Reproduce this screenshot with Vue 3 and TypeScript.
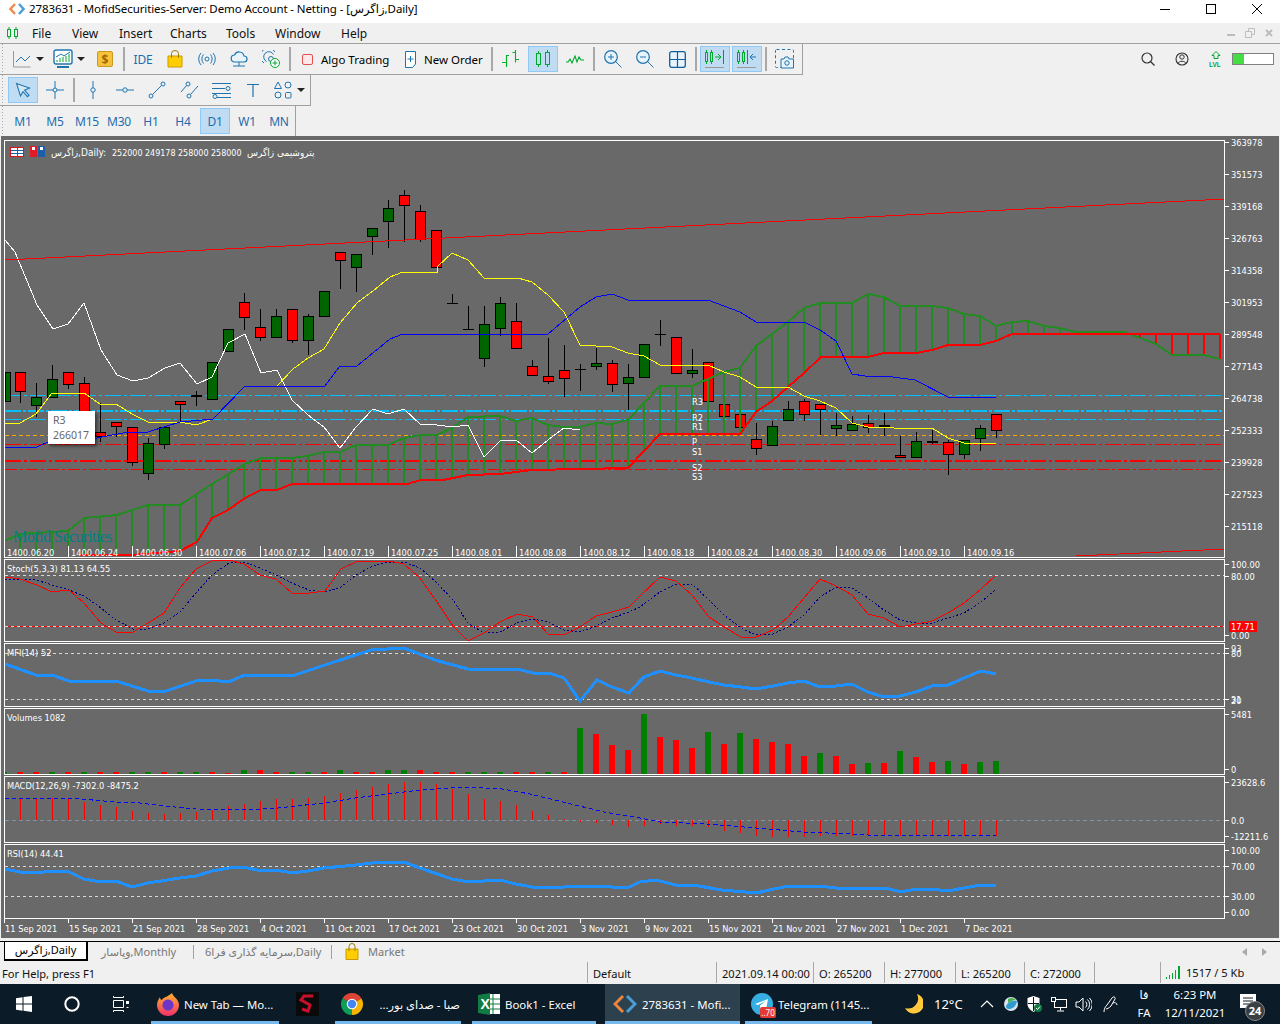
<script setup lang="ts">
type Candle = [number, 'G' | 'R' | 'D', number, number, number, number]
const candles: Candle[] = [
  [4,'G',372,401,372,401],[20,'R',372,391,372,403],[36,'G',397,405,383,417],[52,'G',379,397,365,397],
  [68,'R',372,384,372,389],[84,'R',383,415,377,420],[100,'R',432,436,403,442],[116,'R',422,426,422,437],
  [132,'R',427,462,427,466],[148,'G',443,473,438,480],[164,'G',427,444,427,449],[180,'R',401,404,401,422],
  [196,'D',395,396,391,406],[212,'G',362,399,362,399],[228,'G',329,351,329,351],[244,'R',302,317,293,330],
  [260,'R',327,337,309,341],[276,'G',316,337,309,337],[292,'R',309,340,309,343],[308,'G',316,340,314,355],
  [324,'G',291,316,291,316],[340,'R',252,260,252,289],[356,'G',254,267,254,292],[372,'G',228,236,228,255],
  [388,'G',208,221,200,248],[404,'R',195,205,190,242],[420,'R',211,239,205,242],[436,'R',230,267,230,267],
  [452,'D',303,303,294,303],[468,'D',329,329,306,329],[484,'G',324,358,306,367],[500,'G',303,328,297,336],
  [516,'R',321,348,303,348],[532,'R',366,375,360,375],[548,'R',376,381,338,384],[564,'R',370,378,345,397],
  [580,'D',369,369,364,391],[596,'G',363,366,348,370],[612,'R',363,384,360,392],[628,'G',377,383,364,410],
  [644,'G',344,377,344,377],[660,'D',334,334,320,346],[676,'R',337,373,337,373],[692,'G',370,373,349,378],
  [708,'R',362,401,362,401],[724,'R',404,416,404,416],[740,'R',414,427,414,427],[756,'R',439,448,423,455],
  [772,'G',426,445,421,445],[788,'G',409,420,401,420],[804,'R',401,414,399,421],[820,'R',404,409,404,435],
  [836,'G',425,428,413,436],[852,'G',424,430,416,430],[868,'R',423,427,415,433],[884,'D',425,426,413,436],
  [900,'R',455,457,436,457],[916,'G',441,457,432,457],[932,'D',441,442,430,444],[948,'R',442,454,440,475],
  [964,'G',440,454,440,459],[980,'G',428,438,425,451],[996,'R',414,430,414,438],
]

const yellow = '5,423 20,423 36,414 52,393 84,393 100,404 116,404 132,414 148,422 180,422 196,425 213,419 245,386 277,386 293,369 308,358 324,349 340,323 357,303 373,291 390,277 403,272 437,272 437,267 452,253 468,260 484,278 518,278 532,282 548,295 564,312 580,345 612,347 628,353 644,356 660,365 708,365 724,372 740,377 756,387 788,387 804,396 820,401 836,408 852,423 868,427 894,428 932,428 948,438 964,443 996,443'
const blue = '5,447 37,447 48,442 97,438 128,432 148,432 180,422 213,419 245,386 325,386 340,366 357,366 390,339 403,334 548,334 580,307 596,297 612,294 628,300 708,300 740,312 756,322 804,322 820,330 836,341 852,374 865,376 893,377 915,380 948,397 996,397'
const white = '5,240 15,252 37,305 53,329 68,324 84,303 101,350 117,375 133,381 148,378 165,368 180,363 197,384 212,377 228,343 245,334 261,373 277,370 292,400 308,415 324,427 340,448 356,427 373,409 388,414 404,409 421,425 430,424 452,427 468,425 484,457 500,441 516,440 532,453 548,440 564,428 580,430'
const kumoA = '5,541 20,534 68,531 84,518 117,515 148,505 180,505 212,484 245,464 261,458 292,458 308,456 324,452 340,452 356,445 388,445 404,438 421,435 437,435 452,428 468,417 500,416 516,421 532,418 548,425 564,427 580,427 596,423 612,424 628,420 660,386 692,386 724,372 740,368 756,346 772,334 788,322 804,308 820,303 852,303 868,294 884,297 900,306 932,306 948,308 964,314 980,316 996,326 1012,322 1028,321 1044,326 1060,328 1076,332 1124,332 1140,338 1156,344 1172,355 1204,355 1220,359'
const kumoB = '80,555 132,555 180,551 197,542 212,518 228,510 245,498 261,490 277,490 292,484 407,484 421,480 443,480 468,475 500,474 532,470 628,468 660,434 740,434 756,412 772,401 788,387 804,373 821,357 868,357 884,353 916,353 932,350 948,345 980,345 996,341 1012,334 1220,334'

const stochK = '5,577 20,579 37,585 52,592 69,590 84,603 101,623 116,632 133,632 148,623 164,613 180,588 196,569 212,561 229,560 244,564 260,575 276,579 292,593 309,593 325,591 341,569 356,562 373,561 389,561 404,564 420,578 437,602 453,626 468,641 484,633 500,622 517,614 533,617 548,634 564,635 580,627 596,616 612,612 629,607 640,596 660,577 676,581 692,595 709,617 724,627 741,637 756,637 773,630 788,617 804,598 820,579 836,586 852,595 868,614 884,618 900,627 916,624 932,621 948,613 964,603 981,589 995,576'
const stochD = '5,579 36,580 52,585 69,590 84,596 101,608 116,620 133,629 148,629 164,623 180,612 196,593 212,575 229,563 244,562 260,568 276,575 292,583 309,590 325,592 341,587 356,575 373,566 389,562 404,562 420,568 437,583 453,600 468,623 484,633 500,632 517,623 533,619 548,622 564,630 580,632 596,626 612,618 629,612 640,607 660,592 676,584 692,584 709,600 724,615 741,628 756,635 773,634 788,627 804,615 820,597 836,587 852,588 868,598 884,610 900,620 916,623 932,623 948,618 964,613 981,602 995,590'
const mfi = '5,664 36,675 52,675 69,681 116,681 148,691 163,692 196,681 212,680 228,682 245,675 292,676 325,665 371,650 404,648 435,660 468,669 517,669 533,673 549,673 564,678 580,701 597,680 612,687 629,693 640,681 644,677 660,671 676,675 692,678 709,682 724,685 741,687 756,689 773,686 788,683 804,681 820,687 836,686 852,684 868,692 884,697 900,696 916,692 932,686 948,685 964,678 981,671 996,674'
const macdSig = '5,798 69,798 116,802 132,802 164,806 196,809 244,810 278,808 324,803 355,798 388,794 420,790 449,788 469,787 502,789 530,794 563,802 604,812 640,818 660,822 707,824 756,828 803,832 852,834 868,835 996,835'
const rsi = '5,869 20,872 36,873 52,871 69,872 84,879 100,882 116,881 132,887 148,883 180,878 196,876 212,871 229,868 244,867 261,871 276,870 292,873 308,871 324,868 356,865 372,863 404,862 420,868 452,879 468,882 500,880 516,884 532,887 548,888 564,887 596,886 612,887 629,887 640,882 656,880 676,885 693,885 722,890 756,893 788,886 804,887 820,886 836,888 885,888 901,892 916,889 932,889 948,891 964,888 981,885 996,885'

function parse(s: string): number[][] {
  return s.split(' ').map((p) => p.split(',').map(Number))
}
function interp(s: string, x: number): number {
  const a = parse(s)
  for (let i = 1; i < a.length; i++) {
    if (x <= a[i][0]) {
      const t = (x - a[i - 1][0]) / (a[i][0] - a[i - 1][0])
      return a[i - 1][1] + t * (a[i][1] - a[i - 1][1])
    }
  }
  return a[a.length - 1][1]
}
const kumoBars: { x: number; y1: number; y2: number; c: string }[] = []
for (let x = 20; x <= 1220; x += 16) {
  const a = interp(kumoA, x)
  const b = x < 80 ? 556 : interp(kumoB, x)
  if (Math.abs(a - b) > 2.5) kumoBars.push({ x, y1: a, y2: b, c: a < b ? '#228b22' : '#ff0000' })
}

const levels = [
  { y: 395.5, c: '#00bfff', w: 1, d: '16 3 3 3' },
  { y: 411, c: '#00bfff', w: 2, d: '16 2 3 2' },
  { y: 419.5, c: '#00bfff', w: 1, d: '16 3 3 3' },
  { y: 435.5, c: '#ffa500', w: 1, d: '4 3' },
  { y: 444.5, c: '#ff0000', w: 1, d: '16 3 3 3' },
  { y: 461, c: '#ff0000', w: 2, d: '16 3 3 3' },
  { y: 469.5, c: '#ff0000', w: 1, d: '12 3 3 3' },
]
const pivots = [['R3', 405], ['R2', 421], ['R1', 430], ['P', 445], ['S1', 455], ['S2', 471], ['S3', 480]] as const

const prices = ['363978','351573','339168','326763','314358','301953','289548','277143','264738','252333','239928','227523','215118']
const axis: { t: string; y: number; tick?: boolean }[] = [
  ...prices.map((t, i) => ({ t, y: 142 + 32 * i, tick: true })),
  { t: '100.00', y: 564, tick: true }, { t: '80.00', y: 576, tick: true }, { t: '0.00', y: 635, tick: true },
  { t: '93', y: 648, tick: true }, { t: '80', y: 653, tick: true }, { t: '31', y: 699, tick: true }, { t: '20', y: 700 },
  { t: '5481', y: 714, tick: true }, { t: '0', y: 769, tick: true },
  { t: '23628.6', y: 782, tick: true }, { t: '0.0', y: 820, tick: true }, { t: '-12211.6', y: 836, tick: true },
  { t: '100.00', y: 850, tick: true }, { t: '70.00', y: 866, tick: true }, { t: '30.00', y: 896, tick: true }, { t: '0.00', y: 912, tick: true },
]

const shamsi = ['1400.06.20','1400.06.24','1400.06.30','1400.07.06','1400.07.12','1400.07.19','1400.07.25','1400.08.01','1400.08.08','1400.08.12','1400.08.18','1400.08.24','1400.08.30','1400.09.06','1400.09.10','1400.09.16']
const gregorian = ['11 Sep 2021','15 Sep 2021','21 Sep 2021','28 Sep 2021','4 Oct 2021','11 Oct 2021','17 Oct 2021','23 Oct 2021','30 Oct 2021','3 Nov 2021','9 Nov 2021','15 Nov 2021','21 Nov 2021','27 Nov 2021','1 Dec 2021','7 Dec 2021']
const tickX = shamsi.map((_, i) => 4 + 64 * i)

const volColours = 'GRRGRGRRGGRGGRRGRRGGRGRRGGRRRGGGRRGR'.split('')
const volTall = [15, 16, 21, 24, 25, 26]
const volumes: { x: number; top: number; c: string }[] = volColours.map((c, i) => ({
  x: 4 + 16 * i,
  top: volTall.includes(i) ? 770 : i === 14 ? 773 : 772,
  c,
}))
const volBig: [number, number, string][] = [
  [580,728,'G'],[596,734,'R'],[612,745,'R'],[628,750,'R'],[644,714,'G'],[660,737,'R'],[676,740,'R'],[692,748,'R'],
  [708,732,'G'],[724,744,'R'],[740,733,'G'],[756,739,'R'],[772,742,'R'],[788,744,'R'],[804,756,'R'],[820,753,'G'],
  [836,756,'R'],[852,764,'R'],[868,763,'G'],[884,763,'R'],[900,751,'G'],[916,757,'R'],[932,762,'R'],[948,761,'G'],
  [964,764,'R'],[980,762,'G'],[996,761,'G'],
]
volBig.forEach(([x, top, c]) => volumes.push({ x, top, c }))

const macdTops = [798,798,798,798,802,805,807,811,813,814,813,812,810,806,804,801,799,799,798,796,793,790,787,784,782,782,784,789,794,799,801,805,811,815,819]
const macdBottoms = [822,823,825,827,826,824,826,826,827,831,833,836,837,837,837,836,836,836,836,836,836,836,836,836,836,836,836]
const macdBars: { x: number; y1: number; y2: number }[] = [
  ...macdTops.map((y, i) => ({ x: 20 + 16 * i, y1: y, y2: 820 })),
  ...macdBottoms.map((y, i) => ({ x: 580 + 16 * i, y1: 820, y2: y })),
]

const windows = [[140, 557], [559, 641], [643, 706], [708, 774], [776, 842], [844, 918]]
const dashed = [575, 626, 653, 699, 866, 896]
const titles: [string, number][] = [
  ['Stoch(5,3,3) 81.13 64.55', 572], ['MFI(14) 52', 656], ['Volumes 1082', 721], ['MACD(12,26,9) -7302.0 -8475.2', 789], ['RSI(14) 44.41', 857],
]
const menus = ['File', 'View', 'Insert', 'Charts', 'Tools', 'Window', 'Help']
const frames = ['M1', 'M5', 'M15', 'M30', 'H1', 'H4', 'D1', 'W1', 'MN']
</script>

<template>
  <div class="app">
    <header class="title">
      <svg class="logo" width="16" height="14" viewBox="0 0 16 14"><path d="M6 2 1.500 7 6 12" fill="none" stroke="#f08a4b" stroke-width="2.400"/><path d="M10 2l4.500 5L10 12" fill="none" stroke="#4a9fd6" stroke-width="2.400"/></svg>
      <span class="title-text">2783631 - MofidSecurities-Server: Demo Account - Netting - [زاگرس,Daily]</span>
      <span class="win-btns">
        <svg width="12" height="12" viewBox="0 0 12 12"><path d="M1 6.500h10" stroke="#000"/></svg>
        <svg width="12" height="12" viewBox="0 0 12 12"><rect x="1.500" y="1.500" width="9" height="9" fill="none" stroke="#000"/></svg>
        <svg width="12" height="12" viewBox="0 0 12 12"><path d="M1 1l10 10M11 1 1 11" stroke="#000"/></svg>
      </span>
    </header>

    <nav class="menu">
      <svg class="menu-ico" width="14" height="14" viewBox="0 0 14 14"><g fill="none" stroke="#00a82d"><rect x="1.500" y="3.500" width="3" height="7"/><rect x="8.500" y="3.500" width="3" height="7"/><path d="M3 1v2.500M3 10.500V13M10 1v2.500M10 10.500V13"/></g></svg>
      <div class="menu-items"><span v-for="m in menus" :key="m">{{ m }}</span></div>
      <span class="mdi">
        <svg width="10" height="10" viewBox="0 0 10 10"><rect x="1" y="6" width="8" height="2" fill="#bdbdbd"/></svg>
        <svg width="10" height="10" viewBox="0 0 10 10"><path d="M3.500 3V.5h6v6H7M.5 3.500h6v6h-6z" fill="none" stroke="#bdbdbd"/></svg>
        <svg width="10" height="10" viewBox="0 0 10 10"><path d="M2 2l6 6M8 2 2 8" stroke="#bdbdbd" stroke-width="2"/></svg>
      </span>
    </nav>

    <section class="row">
      <div class="tb tb1">
        <button class="btn w38">
          <svg width="18" height="18" viewBox="0 0 18 18"><path d="M.5 1v16h17" fill="none" stroke="#9a9a9a"/><path d="M3 12l5-5 4 4 5-5" fill="none" stroke="#1f74b0"/></svg>
          <i class="caret"></i>
        </button>
        <button class="btn w39">
          <svg width="20" height="20" viewBox="0 0 20 20"><rect x="1" y="1" width="18" height="14" rx="2" fill="#fff" stroke="#1f74b0" stroke-width="1.400"/><path d="M4 13v-2M7 13V9M10 13V8M13 13V7M16 13V5" stroke="#00a82d"/><path d="M3 8l5-3 3 2 6-4" fill="none" stroke="#1f74b0"/><path d="M4 18h12" stroke="#1f74b0" stroke-width="2"/></svg>
          <i class="caret"></i>
        </button>
        <button class="btn">
          <span class="dollar">$</span>
        </button>
        <i class="sep"></i>
        <button class="btn ide">IDE</button>
        <button class="btn">
          <svg width="16" height="18" viewBox="0 0 16 18"><path d="M1 6h14v11H1z" fill="#ffcd00" stroke="#c79b00"/><path d="M4.500 8V3.500a3.500 3 0 0 1 7 0V8" fill="none" stroke="#a07c00"/></svg>
        </button>
        <button class="btn">
          <svg width="18" height="14" viewBox="0 0 18 14"><circle cx="9" cy="7" r="2" fill="none" stroke="#1f74b0"/><path d="M5.500 2.500a7 7 0 0 0 0 9M12.500 2.500a7 7 0 0 1 0 9M3 1a9 9 0 0 0 0 12M15 1a9 9 0 0 1 0 12" fill="none" stroke="#1f74b0"/></svg>
        </button>
        <button class="btn">
          <svg width="18" height="16" viewBox="0 0 18 16"><path d="M5 11a3.500 3.500 0 0 1-.5-7A5 5 0 0 1 14 5a3 3 0 0 1 0 6z" fill="#e9f3fb" stroke="#1f74b0" stroke-width="1.200"/><path d="M9 11v4M3 15h12" stroke="#1f74b0"/></svg>
        </button>
        <button class="btn">
          <svg width="18" height="18" viewBox="0 0 18 18"><g fill="none" stroke="#1f74b0"><path d="M2 13A8 8 0 1 1 13 2"/><path d="M4.500 11.500A5.200 5.200 0 1 1 11.500 4.500"/><circle cx="9" cy="9" r="2.500"/></g><circle cx="13" cy="13" r="4.500" fill="#fff" stroke="#00a82d"/><path d="M13 10.500v5M10.500 13h5" stroke="#00a82d"/></svg>
        </button>
        <i class="sep"></i>
        <button class="btn algo">
          <i class="check"></i><span>Algo Trading</span>
        </button>
        <button class="btn order">
          <svg width="13" height="17" viewBox="0 0 13 17"><path d="M1.500.5h10v12.500l-3 3.500h-7z" fill="#fff" stroke="#1f74b0"/><path d="M6.500 5v6M3.500 8h6" stroke="#1f74b0"/></svg>
          <span>New Order</span>
        </button>
        <i class="sep"></i>
        <button class="btn">
          <svg width="18" height="18" viewBox="0 0 18 18"><path d="M4.500 5v12M0 12.500h4.500M4.500 5.500H7M13.500 0v12.500M10.500 2.500h3M13.500 9.500H17" fill="none" stroke="#00b324" stroke-width="1.100"/></svg>
        </button>
        <button class="btn on">
          <svg width="14" height="18" viewBox="0 0 14 18"><g fill="none" stroke="#00a82d"><rect x=".5" y="3.500" width="4" height="11" /><rect x="9.500" y="2.500" width="4" height="12"/><path d="M2.500 1v2.500M2.500 14.500V17M11.500 0v2.500M11.500 14.500V17"/></g></svg>
        </button>
        <button class="btn">
          <svg width="18" height="12" viewBox="0 0 18 12"><path d="M0 9h2l2-3 2 4 3-7 2 6 2-5 2 3h3" fill="none" stroke="#00a82d" stroke-width="1.100"/></svg>
        </button>
        <i class="sep"></i>
        <button class="btn">
          <svg width="18" height="18" viewBox="0 0 18 18"><circle cx="7" cy="7" r="6.300" fill="#e9f3fb" stroke="#1f74b0" stroke-width="1.200"/><path d="M7 4v6M4 7h6M11.500 11.500l6 6" stroke="#1f74b0"/></svg>
        </button>
        <button class="btn">
          <svg width="18" height="18" viewBox="0 0 18 18"><circle cx="7" cy="7" r="6.300" fill="#e9f3fb" stroke="#1f74b0" stroke-width="1.200"/><path d="M4 7h6M11.500 11.500l6 6" stroke="#1f74b0"/></svg>
        </button>
        <button class="btn">
          <svg width="17" height="17" viewBox="0 0 17 17"><rect x=".7" y=".7" width="15.600" height="15.600" rx="2" fill="#e9f3fb" stroke="#0f5f9c" stroke-width="1.300"/><path d="M8.500 1v15M1 8.500h15" stroke="#0f5f9c" stroke-width="1.200"/></svg>
        </button>
        <i class="sep"></i>
        <button class="btn on">
          <svg width="20" height="18" viewBox="0 0 20 18"><g fill="none" stroke="#00a82d"><rect x=".5" y="2.500" width="2" height="9"/><rect x="5.500" y="2.500" width="2" height="9"/><path d="M1.500 0v2.500M1.500 11.500V14M6.500 0v2.500M6.500 11.500V14M10 7h5M13 4l3 3-3 3"/></g><path d="M18.500 0v14" stroke="#1f74b0"/><path d="M0 17.500h19" stroke="#9a9a9a"/></svg>
        </button>
        <button class="btn on">
          <svg width="20" height="18" viewBox="0 0 20 18"><g fill="none" stroke="#00a82d"><rect x=".5" y="2.500" width="2" height="9"/><rect x="5.500" y="2.500" width="2" height="9"/><path d="M1.500 0v2.500M1.500 11.500V14M6.500 0v2.500M6.500 11.500V14"/></g><path d="M10.500 0v14" stroke="#1f74b0"/><path d="M19 7h-5M16 4l-3 3 3 3" fill="none" stroke="#1f74b0"/><path d="M0 17.500h19" stroke="#9a9a9a"/></svg>
        </button>
        <i class="sep"></i>
        <button class="btn">
          <svg width="20" height="20" viewBox="0 0 20 20"><rect x=".5" y=".5" width="18" height="18" rx="1" fill="none" stroke="#1f74b0" stroke-dasharray="3 2.500"/><path d="M6 19v-9h3l1-2h3l1 2h4.500v9z" fill="#e9f3fb" stroke="#1f74b0"/><circle cx="12" cy="14" r="2.200" fill="none" stroke="#1f74b0"/></svg>
        </button>
      </div>
      <div class="top-right">
        <svg width="14" height="14" viewBox="0 0 14 14"><circle cx="6" cy="6" r="5" fill="none" stroke="#333" stroke-width="1.200"/><path d="M9.500 9.500l4 4" stroke="#333" stroke-width="1.200"/></svg>
        <svg class="u" width="14" height="14" viewBox="0 0 14 14"><circle cx="7" cy="7" r="6" fill="none" stroke="#333" stroke-width="1.100"/><circle cx="7" cy="5" r="2.200" fill="none" stroke="#333"/><path d="M3 11.500c1-3 7-3 8 0" fill="none" stroke="#333"/></svg>
        <svg class="l" width="14" height="17" viewBox="0 0 14 17"><path d="M7 .5l4 4H9v3H5v-3H3z" fill="none" stroke="#00a82d"/><text class="lvl" x="0" y="16">LVL</text></svg>
        <span class="conn"><i></i></span>
      </div>
    </section>

    <section class="row">
      <div class="tb tb2">
        <button class="btn on">
          <svg width="16" height="16" viewBox="0 0 16 16"><path d="M1.500 1.500l13 4.500-5 2.200 4.500 5-1.500 1.500-4.500-5L5.500 14z" fill="#d5e8f8" stroke="#1f74b0" stroke-width="1.100"/></svg>
        </button>
        <button class="btn">
          <svg width="18" height="18" viewBox="0 0 18 18"><circle cx="9" cy="9" r="2" fill="none" stroke="#1f74b0"/><path d="M9 0v7M9 11v7M0 9h7M11 9h7" stroke="#1f74b0"/></svg>
        </button>
        <i class="sep"></i>
        <button class="btn">
          <svg width="6" height="18" viewBox="0 0 6 18"><circle cx="3" cy="9" r="2.200" fill="none" stroke="#1f74b0"/><path d="M3 0v6.800M3 11.200V18" stroke="#1f74b0"/></svg>
        </button>
        <button class="btn">
          <svg width="18" height="6" viewBox="0 0 18 6"><circle cx="9" cy="3" r="2.200" fill="none" stroke="#1f74b0"/><path d="M0 3h6.800M11.200 3H18" stroke="#1f74b0"/></svg>
        </button>
        <button class="btn">
          <svg width="18" height="18" viewBox="0 0 18 18"><circle cx="3" cy="15" r="2" fill="none" stroke="#1f74b0"/><circle cx="15" cy="3" r="2" fill="none" stroke="#1f74b0"/><path d="M4.500 13.500l9-9" stroke="#1f74b0"/></svg>
        </button>
        <button class="btn">
          <svg width="19" height="18" viewBox="0 0 19 18"><circle cx="8" cy="3" r="2" fill="none" stroke="#1f74b0"/><circle cx="9" cy="15" r="2" fill="none" stroke="#1f74b0"/><path d="M1 11l5.500-6.500M10.500 13.500L18 5" stroke="#1f74b0"/></svg>
        </button>
        <button class="btn">
          <svg width="19" height="18" viewBox="0 0 19 18"><path d="M0 2.500h19M0 7.500h13M0 12.500h19M5 16.500h14" stroke="#1f74b0"/><circle cx="16" cy="7.500" r="2" fill="#f0f0f0" stroke="#1f74b0"/><circle cx="3" cy="15.500" r="2" fill="#f0f0f0" stroke="#1f74b0"/></svg>
        </button>
        <button class="btn">
          <svg width="14" height="14" viewBox="0 0 14 14"><path d="M1 1.500h12M7 1.500V14" stroke="#1f74b0" stroke-width="1.200"/></svg>
        </button>
        <button class="btn w38">
          <svg width="18" height="18" viewBox="0 0 18 18"><path d="M4 1L7.500 7.500H.5z" fill="none" stroke="#1f74b0"/><circle cx="14" cy="4" r="3" fill="none" stroke="#1f74b0"/><circle cx="4" cy="14" r="3" fill="none" stroke="#1f74b0"/><rect x="11.500" y="11.500" width="5.500" height="5.500" rx="1" fill="none" stroke="#1f74b0"/></svg>
          <i class="caret"></i>
        </button>
      </div>
    </section>

    <section class="row">
      <div class="tb tb3">
        <button v-for="f in frames" :key="f" class="btn tf" :class="{ on: f === 'D1' }">{{ f }}</button>
      </div>
    </section>

    <main class="chart">
      <svg class="plot" width="1280" height="802" viewBox="0 136 1280 802">
        <line v-for="l in levels" :key="l.y" x1="5" x2="1225" :y1="l.y" :y2="l.y" :stroke="l.c" :stroke-width="l.w" :stroke-dasharray="l.d" />
        <g shape-rendering="crispEdges">
          <g v-for="c in candles" :key="c[0]">
            <line :x1="c[0] + 0.5" :x2="c[0] + 0.5" :y1="c[4]" :y2="c[5]" stroke="#000" />
            <rect v-if="c[1] !== 'D'" :x="Math.max(c[0] - 5, 5) + 0.5" :y="c[2] + 0.5" :width="c[0] < 5 ? 5 : 10" :height="c[3] - c[2]" :fill="c[1] === 'G' ? '#006400' : '#ff0000'" stroke="#000" />
            <rect v-else :x="c[0] - 5" :y="c[2]" width="11" :height="c[3] - c[2] + 1" fill="#000" />
          </g>
          <line v-for="b in kumoBars" :key="b.x" :x1="b.x" :x2="b.x" :y1="b.y1" :y2="b.y2" :stroke="b.c" stroke-width="2" />
          <polyline :points="kumoA" fill="none" stroke="#228b22" stroke-width="2" />
          <polyline :points="kumoB" fill="none" stroke="#ff0000" stroke-width="2" />
          <polyline :points="white" fill="none" stroke="#fff" />
          <polyline :points="yellow" fill="none" stroke="#ffff00" />
          <polyline :points="blue" fill="none" stroke="#0000ff" />
          <line x1="5" x2="1225" y1="260" y2="199" stroke="#ff0000" />
          <line x1="1076" x2="1225" y1="556" y2="549" stroke="#ff0000" />
          <line x1="5" x2="1225" y1="626.500" y2="626.500" stroke="#ff0000" />
        </g>
        <line v-for="y in dashed" :key="y" x1="5" x2="1225" :y1="y + 0.5" :y2="y + 0.5" stroke="#d8d8d8" stroke-dasharray="3 3" />
        <line x1="5" x2="1225" y1="820.500" y2="820.500" stroke="#8494a4" stroke-dasharray="4 3" />
        <g shape-rendering="crispEdges">
          <polyline :points="stochD" fill="none" stroke="#00008b" stroke-dasharray="2 2" />
          <polyline :points="stochK" fill="none" stroke="#ff0000" />
          <polyline :points="mfi" fill="none" stroke="#1e90ff" stroke-width="3" />
          <rect v-for="v in volumes" :key="v.x" :x="Math.max(v.x - 3, 5)" :y="v.top" :width="v.x < 5 ? 2 : 6" :height="774 - v.top" :fill="v.c === 'G' ? '#008000' : '#ff0000'" />
          <line v-for="b in macdBars" :key="b.x" :x1="b.x + 0.5" :x2="b.x + 0.5" :y1="b.y1" :y2="b.y2" stroke="#ff0000" />
          <polyline :points="macdSig" fill="none" stroke="#0000ff" stroke-dasharray="4 3" />
          <polyline :points="rsi" fill="none" stroke="#1e90ff" stroke-width="3" />
          <rect v-for="w in windows" :key="w[0]" x="4.500" :y="w[0] + 0.5" width="1220" :height="w[1] - w[0]" fill="none" stroke="#fff" />
          <line v-for="a in axis.filter((q) => q.tick)" :key="a.t + a.y" x1="1225" x2="1229" :y1="a.y + 0.5" :y2="a.y + 0.5" stroke="#fff" />
          <g v-for="x in tickX" :key="x">
            <line :x1="x + 0.5" :x2="x + 0.5" y1="546" y2="557" stroke="#fff" />
            <line :x1="x + 0.5" :x2="x + 0.5" y1="918" y2="923" stroke="#fff" />
          </g>
          <rect x="1229" y="621" width="28" height="11" fill="#ff0000" />
        </g>

        <text class="wm" x="13" y="542">Mofid Securities</text>
        <g class="lbl">
          <text v-for="(t, i) in shamsi" :key="t" :x="tickX[i] + 3" y="556">{{ t }}</text>
          <text v-for="(t, i) in gregorian" :key="t" :x="tickX[i] + 1" y="932">{{ t }}</text>
          <text v-for="a in axis" :key="a.t + a.y + 'l'" x="1231" :y="a.y + 4">{{ a.t }}</text>
          <text x="1231" y="630">17.71</text>
          <text v-for="p in pivots" :key="p[0]" x="692" :y="p[1]">{{ p[0] }}</text>
          <text v-for="t in titles" :key="t[0]" x="7" :y="t[1]">{{ t[0] }}</text>
        </g>

        <g shape-rendering="crispEdges">
          <rect x="10.500" y="147.500" width="13" height="9" fill="#fff" stroke="#d8141c" />
          <path d="M11 150.500h12M11 153.500h12M17.500 148v9" stroke="#1a5fa8" fill="none" />
          <rect x="30" y="146" width="7" height="11" fill="#e01c24" />
          <rect x="38" y="146" width="7" height="11" fill="#1a5fa8" />
          <rect x="32" y="147" width="3" height="3" fill="#fff" />
          <rect x="40" y="147" width="3" height="3" fill="#fff" />
        </g>
        <text class="hdr hdr-w" x="51" y="156">زاگرس,Daily:</text>
        <text class="hdr" x="112" y="156">252000 249178 258000 258000</text>
        <text class="hdr hdr-w" x="247" y="156">پتروشیمی زاگرس</text>
      </svg>
      <div class="tip"><span>R3</span><span>266017</span></div>
    </main>

    <footer class="tabs">
      <span class="tab active">زاگرس,Daily</span>
      <span class="tab t2">وپاسار,Monthly</span>
      <span class="tab t3">سرمایه گذاری فرا6,Daily</span>
      <span class="tab t4">
        <svg width="14" height="17" viewBox="0 0 14 17"><path d="M1 6h12v10.500H1z" fill="#ffcd00" stroke="#c79b00"/><path d="M4 8V3.500a3 3 0 0 1 6 0V8" fill="none" stroke="#a07c00"/></svg>
        Market
      </span>
      <span class="tab-arrows">
        <i class="ar left"></i><i class="ar right"></i>
      </span>
    </footer>

    <footer class="status">
      <span class="c-help">For Help, press F1</span>
      <span class="c-def">Default</span>
      <span class="c-date">2021.09.14 00:00</span>
      <span class="c-o">O: 265200</span>
      <span class="c-o">H: 277000</span>
      <span class="c-l">L: 265200</span>
      <span class="c-c">C: 272000</span>
      <span class="c-b"></span>
      <span class="c-net">
        <svg width="15" height="13" viewBox="0 0 15 13"><path d="M.5 13v-2M3.500 13V9M6.500 13V7M9.500 13V4M12.500 13V0M13.500 13V0" stroke="#00a82d"/></svg>
        1517 / 5 Kb
      </span>
    </footer>

    <footer class="taskbar">
      <div class="sys">
        <svg width="16" height="16" viewBox="0 0 16 16"><path d="M0 2.200l6.500-.9V7.500H0zM7.500 1.100L16 0v7.500H7.500zM0 8.500h6.500v6.200L0 13.800zM7.500 8.500H16V16l-8.500-1.200z" fill="#fff"/></svg>
      </div>
      <div class="sys">
        <svg width="16" height="16" viewBox="0 0 16 16"><circle cx="8" cy="8" r="6.700" fill="none" stroke="#fff" stroke-width="2"/></svg>
      </div>
      <div class="sys">
        <svg width="18" height="16" viewBox="0 0 18 16"><path d="M2.500 0v1.500h10V0M2.500 4.500h10v7h-10zM2.500 16v-1.500h10V16" fill="none" stroke="#fff"/><rect x="15" y="5" width="3" height="3" fill="#fff"/><rect x="15.500" y="11" width="2" height="1" fill="#fff"/></svg>
      </div>
      <div class="task ff">
        <svg width="24" height="24" viewBox="0 0 24 24"><defs><linearGradient id="ffg" x1="0" y1="0" x2="0" y2="1"><stop offset="0" stop-color="#ffb32c"/><stop offset="1" stop-color="#f2316a"/></linearGradient></defs><path d="M16 1c1 4 7 6 7 12a11 11 0 0 1-22 0c0-4 2-6 3-8 0 2 1 3 2 3 1-3 6-3 10-7z" fill="url(#ffg)"/><circle cx="12" cy="13" r="5.500" fill="#6e35c9"/></svg>
        <span>New Tab — Mo...</span>
      </div>
      <div class="task sp">
        <svg width="23" height="24" viewBox="0 0 23 24"><rect width="23" height="24" fill="#0a0a0a"/><path d="M17 4H8L5 8l9 5-2 6-6-2" fill="none" stroke="#c8102e" stroke-width="3"/></svg>
      </div>
      <div class="task cr">
        <svg width="24" height="24" viewBox="0 0 24 24"><path d="M12 12L2.470 6.500A11 11 0 0 1 21.530 6.500z" fill="#db4437"/><path d="M12 12L2.470 6.500A11 11 0 0 0 12 23z" fill="#0f9d58"/><path d="M12 12L21.530 6.500A11 11 0 0 1 12 23z" fill="#f4b400"/><circle cx="12" cy="12" r="5.300" fill="#fff"/><circle cx="12" cy="12" r="4.200" fill="#4285f4"/></svg>
        <span class="rtl" dir="rtl">صبا - صدای بور...</span>
      </div>
      <div class="task xl">
        <svg width="22" height="24" viewBox="0 0 22 24"><rect x="9" y="2" width="13" height="20" fill="#fff"/><path d="M9 7h13M9 12h13M9 17h13M15 2v20" stroke="#107c41"/><path d="M0 3l12-2v22L0 21z" fill="#107c41"/><text class="xtxt" x="2.500" y="16.500">X</text></svg>
        <span>Book1 - Excel</span>
      </div>
      <div class="task mt">
        <svg width="24" height="20" viewBox="0 0 24 20"><path d="M10 2 2 10l8 8" fill="none" stroke="#e9863f" stroke-width="3"/><path d="M14 2l8 8-8 8" fill="none" stroke="#4b9fd6" stroke-width="3"/></svg>
        <span>2783631 - Mofi...</span>
      </div>
      <div class="task tg">
        <span class="tg-ico">
          <svg width="22" height="22" viewBox="0 0 22 22"><circle cx="11" cy="11" r="11" fill="#37aee2"/><path d="M4 11l13-5-2 11-4-3-2 2v-3.500l6-5-8 4.500z" fill="#fff"/></svg>
          <b>..70</b>
        </span>
        <span>Telegram (1145...</span>
      </div>
      <div class="tray">
        <svg class="t-moon" width="18" height="20" viewBox="0 0 18 20"><path d="M12 0A10 10 0 0 1 0 14a10 10 0 1 0 12-14z" fill="#ffc83d"/></svg>
        <span class="t-temp">12°C</span>
        <svg class="t-caret" width="14" height="8" viewBox="0 0 14 8"><path d="M1 7l6-6 6 6" fill="none" stroke="#fff" stroke-width="1.200"/></svg>
        <svg class="t-globe" width="14" height="16" viewBox="0 0 14 16"><circle cx="7" cy="8" r="7" fill="#d8e3ea"/><path d="M2 10c2-4 6-6 11-5-1 6-5 8-8 8-2 0-3-1-3-3z" fill="#2e9ad0"/><path d="M4 3c3-2 6-1 8 1-3 0-5 1-8 3z" fill="#4caf50"/></svg>
        <svg class="t-shield" width="15" height="16" viewBox="0 0 15 16"><path d="M6.500 0l6 2v6c0 4-3 6-6 8-3-2-6-4-6-8V2z" fill="#fff"/><path d="M6.500 1v14M1 7.500h11" stroke="#0b1b27" stroke-width="1"/><circle cx="11" cy="12" r="4" fill="#107c41"/><path d="M9 12l1.500 1.500L13 10.500" fill="none" stroke="#fff"/></svg>
        <svg class="t-net" width="16" height="15" viewBox="0 0 16 15"><rect x="3.500" y="2.500" width="12" height="8" fill="none" stroke="#fff"/><rect x=".5" y=".5" width="4" height="4" fill="#0b1b27" stroke="#fff"/><path d="M9.500 10.500v3M6 14h7" stroke="#fff"/></svg>
        <svg class="t-spk" width="17" height="15" viewBox="0 0 17 15"><path d="M1 5h3l4-4v13l-4-4H1z" fill="none" stroke="#fff"/><path d="M10.500 4.500a4 4 0 0 1 0 6M12.500 2.500a7 7 0 0 1 0 10M14.500 1a9 9 0 0 1 0 13" fill="none" stroke="#fff"/></svg>
        <svg class="t-pen" width="16" height="18" viewBox="0 0 16 18"><path d="M1 17c0-3 1-5 3-7l5-7c1-2 4-1 3 1L8 11c-2 2-4 3-5 3" fill="none" stroke="#fff"/><path d="M10 8c2-1 4 0 4 2" fill="none" stroke="#fff"/></svg>
        <span class="t-lang"><span>فا</span><span>FA</span></span>
        <span class="t-clock"><span>6:23 PM</span><span>12/11/2021</span></span>
        <span class="t-note">
          <svg width="16" height="14" viewBox="0 0 16 14"><rect width="16" height="14" fill="#fff"/><path d="M3 4h10M3 7h10M3 10h7" stroke="#0b1b27"/></svg>
          <b>24</b>
        </span>
      </div>
    </footer>
  </div>
</template>

<style scoped>
.app {
  width: 1280px;
  height: 1024px;
  overflow: hidden;
  background: #f0f0f0;
  display: flex;
  flex-direction: column;
  font-family: "Noto Sans", "DejaVu Sans", sans-serif;
  font-size: 11.500px;
  color: #000;
}
.title {
  height: 23px;
  background: #fff;
  display: flex;
  align-items: center;
  flex: none;
  padding-bottom: 6px;
  box-sizing: border-box;
}
.logo { margin-left: 9px; margin-right: 4px; }
.title-text { font-size: 11.500px; letter-spacing: -0.1px; white-space: nowrap; }
.win-btns {
  margin-left: auto;
  display: flex;
  gap: 34px;
  padding-right: 17px;
}
.menu {
  height: 20px;
  flex: none;
  display: flex;
  align-items: center;
  border-bottom: 1px solid #a0a0a0;
  box-sizing: content-box;
  font-size: 12px;
}
.menu-ico { margin-left: 6px; flex: none; }
.menu-items {
  margin-left: 12px;
  display: grid;
  grid-template-columns: 40px 47px 51px 56px 49px 66px 40px;
  color: #111;
}
.mdi {
  margin-left: auto;
  display: flex;
  gap: 9px;
  padding-right: 6px;
}
.row {
  flex: none;
  display: flex;
  align-items: flex-start;
}
.tb {
  height: 30px;
  box-sizing: content-box;
  display: flex;
  align-items: center;
  border-right: 1px solid #a0a0a0;
  border-bottom: 1px solid #a0a0a0;
  background-image: radial-gradient(circle, #a8a8a8 0.6px, transparent 0.7px);
  background-size: 3px 3px;
  background-repeat: repeat-y;
  background-position: 1px 2px;
}
.tb1 { width: 793px; padding-left: 9px; margin-bottom: 0; }
.tb2 { width: 302px; padding-left: 8px; }
.tb3 { width: 287px; padding-left: 8px; border-bottom: 0; height: 30px; }
.btn {
  width: 30px;
  height: 26px;
  margin: 0 2px 0 0;
  padding: 0;
  border: 1px solid transparent;
  background: transparent;
  display: flex;
  align-items: center;
  justify-content: center;
  flex: none;
  box-sizing: border-box;
  font: inherit;
  color: #000;
}
.btn.on { background: #c0dcf3; border-color: #90c8f6; }
.w38 { width: 38px; gap: 3px; justify-content: flex-start; padding-left: 3px; }
.w39 { width: 39px; gap: 2px; justify-content: flex-start; padding-left: 3px; }
.caret {
  width: 0; height: 0;
  border-left: 4px solid transparent;
  border-right: 4px solid transparent;
  border-top: 4px solid #222;
  margin-left: 2px;
}
.sep { width: 2px; height: 24px; background: #a8a8a8; margin: 0 3px 0 1px; flex: none; }
.dollar {
  width: 16px; height: 16px;
  background: #f8c33c;
  border: 1px solid #c99a1c;
  border-radius: 2px;
  color: #9a6b00;
  font-weight: 700;
  font-size: 12px;
  line-height: 15px;
  text-align: center;
  box-sizing: border-box;
}
.ide { color: #1f6bad; font-size: 12px; letter-spacing: -0.2px; }
.algo { width: 102px; justify-content: flex-start; padding-left: 7px; gap: 8px; }
.check { width: 11px; height: 11px; border: 1px solid #e05050; background: #fde9e9; border-radius: 2px; box-sizing: border-box; }
.order { width: 90px; justify-content: flex-start; padding-left: 5px; gap: 7px; }
.tf { color: #1f6bad; font-size: 12px; letter-spacing: -0.2px; }
.top-right {
  margin-left: auto;
  display: flex;
  align-items: center;
  height: 30px;
  padding-right: 6px;
}
.u { margin-left: 20px; }
.l { margin-left: 20px; margin-top: 1px; }
.lvl { font: 700 6.500px "Liberation Sans", sans-serif; fill: #00a82d; }
.conn {
  width: 42px; height: 12px;
  margin-left: 9px;
  background: #fff;
  border: 1px solid #808080;
  display: block;
  box-sizing: border-box;
}
.conn i { display: block; width: 11px; height: 100%; background: #44dd44; }

.chart {
  height: 802px;
  flex: none;
  position: relative;
  background: #696969;
  margin: 0 1px;
  overflow: hidden;
}
.plot { display: block; margin-left: -1px; }
.lbl text {
  font: 9.200px "DejaVu Sans Condensed", "Liberation Sans", sans-serif;
  fill: #fff;
}
.hdr {
  font: 8.900px "DejaVu Sans Condensed", "DejaVu Sans", sans-serif;
  fill: #fff;
}
.hdr-w { font-size: 10px; }
.wm {
  font: 16px "Liberation Serif", serif;
  letter-spacing: -0.5px;
  fill: #008080;
}
.xtxt { font: 700 14px "Liberation Sans", sans-serif; fill: #fff; }
.tip {
  position: absolute;
  left: 47px;
  top: 275px;
  width: 47px;
  height: 33px;
  background: #fff;
  box-shadow: 2px 2px 3px rgba(0, 0, 0, 0.5);
  display: flex;
  flex-direction: column;
  justify-content: center;
  padding-left: 5px;
  box-sizing: border-box;
  font-size: 10.500px;
  line-height: 15px;
  color: #666;
}

.tabs {
  margin-top: 3px;
  height: 20px;
  flex: none;
  border-top: 1px solid #000;
  display: flex;
  align-items: center;
  box-sizing: border-box;
  color: #777;
  font-size: 11px;
  position: relative;
}
.tab { white-space: nowrap; }
.active {
  margin-left: 4px;
  width: 84px;
  height: 19px;
  background: #fff;
  color: #000;
  border-left: 1px solid #000;
  border-right: 2px solid #000;
  border-bottom: 2px solid #000;
  box-sizing: border-box;
  text-align: center;
  line-height: 16px;
}
.t2 { margin-left: 13px; width: 92px; border-right: 1px solid #a0a0a0; height: 14px; line-height: 14px; }
.t3 { margin-left: 11px; width: 126px; border-right: 1px solid #a0a0a0; height: 14px; line-height: 14px; }
.t4 { margin-left: 13px; display: flex; align-items: center; gap: 9px; }
.tab-arrows { margin-left: auto; display: flex; gap: 15px; padding-right: 13px; }
.ar { width: 0; height: 0; border-top: 4px solid transparent; border-bottom: 4px solid transparent; }
.ar.left { border-right: 5px solid #a8a8a8; }
.ar.right { border-left: 5px solid #a8a8a8; }

.status {
  height: 23px;
  flex: none;
  display: grid;
  grid-template-columns: 587px 129px 97px 71px 71px 69px 70px 66px 120px;
  align-items: center;
  color: #111;
  font-size: 11.100px;
}
.status span {
  height: 21px;
  line-height: 23px;
  padding-left: 5px;
  border-left: 1px solid #a8a8a8;
  white-space: nowrap;
  box-sizing: border-box;
}
.status .c-help { border-left: 0; padding-left: 2px; }
.c-net { display: flex; align-items: center; gap: 5px; }

.taskbar {
  height: 40px;
  flex: none;
  background: #0b1b27;
  display: flex;
  align-items: center;
  color: #fff;
  font-size: 11.400px;
}
.sys { width: 48px; height: 40px; display: flex; align-items: center; justify-content: center; flex: none; }
.task {
  height: 40px;
  display: flex;
  align-items: center;
  flex: none;
  box-sizing: border-box;
  box-shadow: inset 0 -3px 0 #76b9ed;
  gap: 4px;
  white-space: nowrap;
  overflow: hidden;
}
.ff { margin-left: 7px; width: 128px; padding-left: 5px; }
.sp { margin-left: 4px; width: 48px; justify-content: center; box-shadow: none; }
.cr { margin-left: 4px; width: 126px; padding-left: 5px; }
.rtl { width: 90px; text-align: right; margin-left: 2px; }
.xl { margin-left: 11px; width: 124px; padding-left: 6px; gap: 5px; }
.mt { margin-left: 9px; width: 135px; padding-left: 8px; gap: 5px; background: #2c404d; }
.tg { margin-left: 5px; width: 127px; padding-left: 6px; gap: 5px; overflow: visible; }
.tg-ico { position: relative; display: block; height: 22px; }
.tg-ico b {
  position: absolute;
  left: 9px;
  top: 14px;
  width: 16px;
  height: 11px;
  background: #e53935;
  border-radius: 2px;
  font-size: 8px;
  font-weight: 400;
  line-height: 11px;
  text-align: center;
}
.tray { display: flex; align-items: center; flex: none; height: 40px; }
.t-moon { margin-left: 33px; }
.t-temp { margin-left: 11px; width: 30px; font-size: 13px; white-space: nowrap; }
.t-caret { margin-left: 16px; }
.t-globe { margin-left: 10px; }
.t-shield { margin-left: 9px; }
.t-net { margin-left: 9px; }
.t-spk { margin-left: 8px; }
.t-pen { margin-left: 11px; }
.t-lang, .t-clock {
  display: flex;
  flex-direction: column;
  align-items: center;
  line-height: 18px;
  white-space: nowrap;
}
.t-lang { margin-left: 14px; width: 22px; }
.t-clock { margin-left: 5px; width: 70px; }
.t-note { margin-left: 10px; width: 25px; position: relative; height: 20px; display: block; }
.t-note b {
  position: absolute;
  left: 5px;
  top: 7px;
  width: 20px;
  height: 20px;
  border-radius: 50%;
  background: #3a3f44;
  border: 1px solid #888;
  box-sizing: border-box;
  font-size: 11px;
  line-height: 18px;
  text-align: center;
}
</style>

<style>
html, body { margin: 0; background: #f0f0f0; }
</style>
